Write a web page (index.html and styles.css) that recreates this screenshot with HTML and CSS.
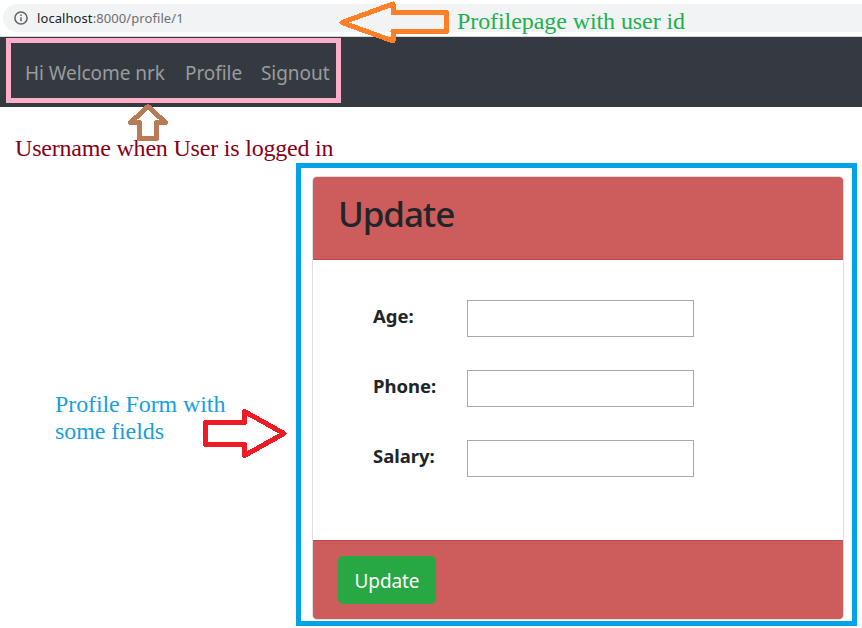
FILE: index.html
```html
<!DOCTYPE html>
<html lang="en">
<head>
<meta charset="utf-8">
<title>Profile</title>
<link rel="stylesheet" href="styles.css">
</head>
<body>
<header class="browser">
  <div class="address">
    <svg class="info" viewBox="0 0 14 14" width="14" height="14"><circle cx="7" cy="7" r="6.1" fill="none" stroke="#5f6368" stroke-width="1.5"/><path d="M7 6.2v4M7 3.5v1.4" stroke="#5f6368" stroke-width="1.5"/></svg>
    <span class="url"><span class="host">localhost</span>:8000/profile/1</span>
  </div>
</header>
<nav class="navbar">
  <div class="nav-group">
    <a class="nav-link welcome">Hi Welcome nrk</a>
    <a class="nav-link profile">Profile</a>
    <a class="nav-link signout">Signout</a>
  </div>
</nav>
<main class="content">
  <section class="form-frame">
    <form class="card">
      <div class="card-header"><h1>Update</h1></div>
      <div class="card-body">
        <div class="field"><label for="age">Age:</label><input id="age" type="text"></div>
        <div class="field"><label for="phone">Phone:</label><input id="phone" type="text"></div>
        <div class="field"><label for="salary">Salary:</label><input id="salary" type="text"></div>
      </div>
      <div class="card-footer"><button type="button"><span>Update</span></button></div>
    </form>
  </section>
</main>
<svg class="arrows" width="862" height="628" viewBox="0 0 862 628" fill="none" shape-rendering="crispEdges">
  <path d="M342 22.5L393 4V12.500H446.500V31.500H393V41Z" stroke="#ff7f27" stroke-width="5" stroke-linejoin="round"/>
  <path d="M148 106.500L165.500 122.500H156.500V138.500H139.500V122.500H130.500Z" stroke="#b97a57" stroke-width="5" stroke-linejoin="round"/>
  <path d="M205.500 422.500H244.500V411.500L284 433.500L244.500 455.500V444.500H205.500Z" stroke="#ed1c24" stroke-width="5" stroke-linejoin="round"/>
</svg>
<p class="note note-url">Profilepage with user id</p>
<p class="note note-user">Username when User is logged in</p>
<p class="note note-form">Profile Form with<br>some fields</p>
</body>
</html>
```
FILE: styles.css
```css
* { box-sizing: border-box; }
body {
  position: relative;
  width: 862px;
  height: 628px;
  margin: 0;
  overflow: hidden;
  background: #fff;
  color: #212529;
  font-family: "Noto Sans", "Open Sans", sans-serif;
}
.browser { height: 37px; padding: 4px 0 4px 3px; border-bottom: 1px solid #d5d7da; }
.address {
  display: flex;
  align-items: center;
  height: 28px;
  padding-left: 11px;
  gap: 9px;
  border-radius: 14px 0 0 14px;
  background: #f1f3f4;
}
.info { flex: none; }
.url { font-size: 13px; line-height: 28px; color: #6b6f73; letter-spacing: 0.08px; }
.host { color: #202124; }
.navbar { height: 70px; padding: 1px 6px; background: #343a40; }
.nav-group {
  display: flex;
  align-items: center;
  width: 335px;
  height: 65px;
  padding: 4px 0 0 14px;
  border: 5px solid #ffaec9;
}
.nav-link { font-size: 19px; line-height: 30px; color: #999c9f; white-space: nowrap; letter-spacing: -0.06px; }
.welcome { width: 160px; }
.profile { width: 76px; }
.content { padding: 56px 5px 0 296px; }
.form-frame { height: 463px; padding: 8px; padding-left: 11px; border: 5px solid #00a2e8; }
.card {
  display: flex;
  flex-direction: column;
  width: 532px;
  height: 444px;
  border: 1px solid #dfdfdf;
  border-radius: 5px;
  overflow: hidden;
}
.card-header { height: 83px; padding: 12px 25px; background: #cd5c5c; border-bottom: 1px solid #b14f50; }
h1 { margin: 0; font-size: 35px; line-height: 50px; font-weight: 500; letter-spacing: -1.1px; }
.card-body { flex: 1; padding: 40px 59px 0; }
.field { display: flex; height: 70px; }
label { width: 95px; padding-left: 1px; font-size: 18.500px; line-height: 32px; font-weight: 700; letter-spacing: -0.02px; }
input { width: 227px; height: 37px; padding: 0 8px; border: 1px solid #a9a9a9; border-radius: 0; background: #fff; }
.card-footer { height: 79px; padding: 15px 25px; background: #cd5c5c; border-top: 1px solid #b14f50; }
button {
  display: block;
  width: 98px;
  height: 48px;
  padding: 0;
  border: 0;
  border-radius: 5px;
  background: #28a745;
  color: #fff;
  font: 19px/50px "Noto Sans", sans-serif;
  letter-spacing: -0.1px;
}
.arrows { position: absolute; left: 0; top: 0; }
.note {
  position: absolute;
  margin: 0;
  font: 24px/27px "Liberation Serif", serif;
  white-space: nowrap;
}
.note-url { left: 457px; top: 8px; color: #22b14c; letter-spacing: -0.08px; }
.note-user { left: 15px; top: 135px; color: #880015; letter-spacing: -0.2px; }
.note-form { left: 55px; top: 391px; color: #1a9fdc; letter-spacing: -0.1px; }
```
